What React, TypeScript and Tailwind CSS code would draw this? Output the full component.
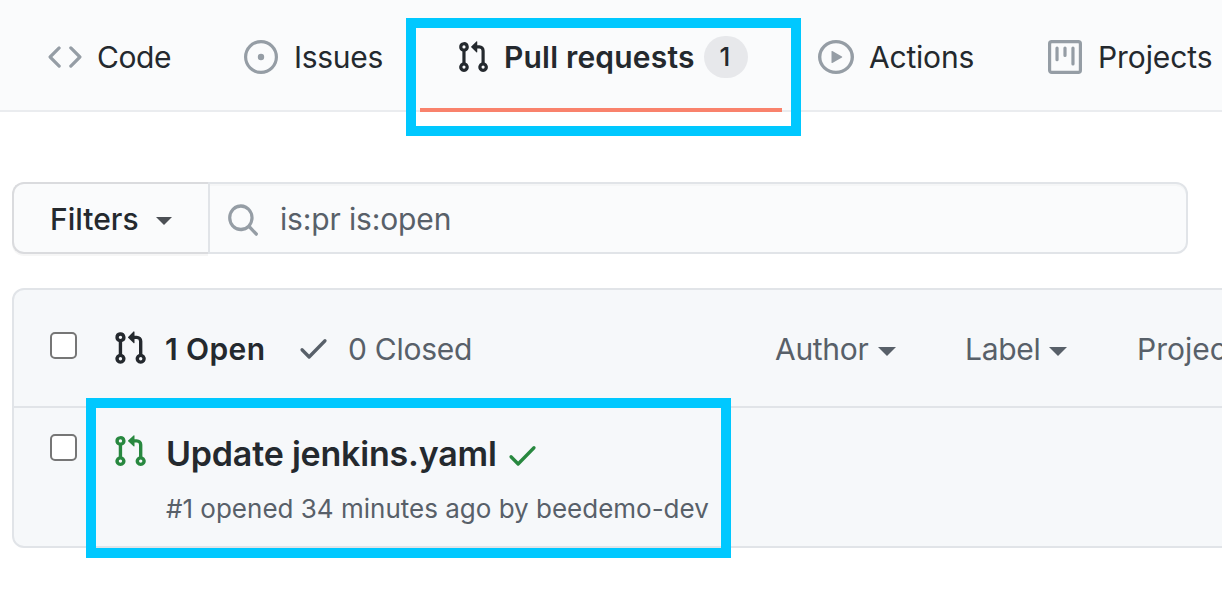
import type { ReactNode } from "react";

const paths = {
  code: "M4.72 3.22a.75.75 0 011.06 1.06L2.06 8l3.72 3.72a.75.75 0 11-1.06 1.06L.47 8.53a.75.75 0 010-1.06l4.25-4.25zm6.56 0a.75.75 0 10-1.06 1.06L13.94 8l-3.72 3.72a.75.75 0 101.06 1.06l4.25-4.25a.75.75 0 000-1.06l-4.25-4.25z",
  issue:
    "M8 9.5a1.5 1.5 0 100-3 1.5 1.5 0 000 3zM8 0a8 8 0 100 16A8 8 0 008 0zM1.5 8a6.5 6.5 0 1113 0 6.5 6.5 0 01-13 0z",
  pull: "M7.177 3.073L9.573.677A.25.25 0 0110 .854v4.792a.25.25 0 01-.427.177L7.177 3.427a.25.25 0 010-.354zM3.75 2.5a.75.75 0 100 1.5.75.75 0 000-1.5zm-2.25.75a2.25 2.25 0 113 2.122v5.256a2.251 2.251 0 11-1.5 0V5.372A2.25 2.25 0 011.5 3.25zM11 2.5h-1V4h1a1 1 0 011 1v5.628a2.251 2.251 0 101.5 0V5A2.5 2.5 0 0011 2.5zm1 10.25a.75.75 0 111.5 0 .75.75 0 01-1.5 0zM3.75 12a.75.75 0 100 1.5.75.75 0 000-1.5z",
  play: "M1.5 8a6.5 6.5 0 1113 0 6.5 6.5 0 01-13 0zM8 0a8 8 0 100 16A8 8 0 008 0zM6.379 5.227A.25.25 0 006 5.442v5.117a.25.25 0 00.379.214l4.264-2.559a.25.25 0 000-.428L6.379 5.227z",
  project:
    "M1.75 0A1.75 1.75 0 000 1.75v12.5C0 15.216.784 16 1.75 16h12.5A1.75 1.75 0 0016 14.25V1.75A1.75 1.75 0 0014.25 0H1.75zM1.5 1.75a.25.25 0 01.25-.25h12.5a.25.25 0 01.25.25v12.5a.25.25 0 01-.25.25H1.75a.25.25 0 01-.25-.25V1.75zM11.75 3a.75.75 0 00-.75.75v7.5a.75.75 0 001.5 0v-7.5a.75.75 0 00-.75-.75zm-8.25.75a.75.75 0 011.5 0v5.5a.75.75 0 01-1.5 0v-5.5zM8 3a.75.75 0 00-.75.75v3.5a.75.75 0 001.5 0v-3.5A.75.75 0 008 3z",
  check:
    "M13.78 4.22a.75.75 0 010 1.06l-7.25 7.25a.75.75 0 01-1.06 0L2.22 9.28a.75.75 0 011.06-1.06L6 10.94l6.72-6.72a.75.75 0 011.06 0z",
  search:
    "M11.5 7a4.499 4.499 0 11-8.998 0A4.499 4.499 0 0111.5 7zm-.82 4.74a6 6 0 111.06-1.06l3.04 3.04a.75.75 0 11-1.06 1.06l-3.04-3.04z",
};

function Icon({ name, className }: { name: keyof typeof paths; className: string }) {
  return (
    <svg
      viewBox="0 0 16 16"
      preserveAspectRatio="none"
      fill="currentColor"
      fillRule="evenodd"
      className={`shrink-0 ${className}`}
      aria-hidden="true"
    >
      <path d={paths[name]} />
    </svg>
  );
}

function Caret({ className }: { className: string }) {
  return (
    <svg viewBox="0 0 18 9" preserveAspectRatio="none" fill="currentColor" className={`shrink-0 ${className}`} aria-hidden="true">
      <path d="M0 0h18L9 9z" />
    </svg>
  );
}

function Checkbox() {
  return <span role="checkbox" aria-checked="false" className="block h-[27px] w-[27px] shrink-0 rounded-[5px] border-2 border-[#767676] bg-white" />;
}

function Tab({ className, children }: { className: string; children: ReactNode }) {
  return <a className={`flex h-[34px] shrink-0 items-center ${className}`}>{children}</a>;
}

export default function App() {
  return (
    <div className="relative h-[616px] w-[1222px] overflow-hidden bg-white font-['Inter',sans-serif] text-[30px] leading-[36px] whitespace-nowrap text-[#24292e]">
      <nav className="flex h-[112px] border-b-2 border-[#eaecef] bg-[#fafbfc]">
        <Tab className="mt-10 ml-12 w-[196px]">
          <Icon name="code" className="h-[34px] w-[34px] text-[#959da5]" />
          <span className="ml-[15px] tracking-[-0.4px]">Code</span>
        </Tab>
        <Tab className="mt-10 w-[176px]">
          <Icon name="issue" className="h-[34px] w-[34px] text-[#959da5]" />
          <span className="ml-4 tracking-[-0.3px]">Issues</span>
        </Tab>
        <a className="flex h-[112px] w-[362px] shrink-0 border-b-4 border-[#f9826c] pt-[36px] pl-9">
          <Icon name="pull" className="mt-1 h-[34px] w-[34px]" />
          <span className="mt-[3px] ml-[14px] w-[200px] font-semibold tracking-[0.2px]">Pull requests</span>
          <span className="flex h-[42px] w-[44px] items-center justify-center rounded-full bg-[#e7e8eb] pr-[2px] text-[26px] font-medium">1</span>
        </a>
        <Tab className="mt-10 ml-9 w-[230px]">
          <Icon name="play" className="h-[34px] w-9 text-[#959da5]" />
          <span className="ml-[15px] tracking-[-0.2px]">Actions</span>
        </Tab>
        <Tab className="mt-10">
          <Icon name="project" className="h-[34px] w-[34px] text-[#959da5]" />
          <span className="ml-4 tracking-[-0.1px]">Projects</span>
        </Tab>
      </nav>

      <div className="mt-[70px] ml-3 flex h-[72px] w-[1176px]">
        <button className="flex w-[196px] shrink-0 items-center rounded-l-[12px] border-2 border-r-0 border-[#dadbde] bg-[#fafbfc] pt-px pl-9 shadow-[0_2px_0_rgba(27,31,35,0.04)]">
          <span className="w-[106px] text-left font-medium">Filters</span>
          <Caret className="mt-1 h-2 w-4 text-[#4c5055]" />
        </button>
        <div className="flex flex-1 items-center rounded-r-[12px] border-2 border-[#e1e4e8] bg-[#fafbfc] pl-4 text-[#586069] shadow-[inset_0_2px_0_rgba(225,228,232,0.2)]">
          <Icon name="search" className="mt-[3px] h-9 w-[34px] text-[#959da5]" />
          <span className="mt-px ml-5 tracking-[-0.15px]">is:pr is:open</span>
        </div>
      </div>

      <section className="mt-[34px] ml-3 h-[260px] w-[1300px] rounded-[12px] border-2 border-[#e1e4e8] bg-[#f6f8fa]">
        <header className="flex h-[118px] items-start border-b-2 border-[#e1e4e8] pt-10 pl-9 text-[#586069]">
          <div className="mt-[2px] w-[62px] shrink-0">
            <Checkbox />
          </div>
          <Icon name="pull" className="h-9 w-9 text-[#24292e]" />
          <span className="mt-px ml-[17px] w-[131px] shrink-0 font-semibold tracking-[0.4px] text-[#24292e]">1 Open</span>
          <Icon name="check" className="h-9 w-[35px]" />
          <span className="mt-px ml-[17px] w-[427px] shrink-0 tracking-[-0.25px]">0 Closed</span>
          <span className="mt-px flex w-[190px] shrink-0 items-center">
            <span className="tracking-[-0.3px]">Author</span>
            <Caret className="mt-[5px] ml-[10px] h-[9px] w-[18px]" />
          </span>
          <span className="mt-px flex w-[172px] shrink-0 items-center">
            <span className="tracking-[-0.3px]">Label</span>
            <Caret className="mt-[5px] ml-[9px] h-[9px] w-[18px]" />
          </span>
          <span className="mt-px shrink-0">Projects</span>
        </header>
        <article className="flex pt-[26px] pl-9">
          <div className="w-[62px] shrink-0">
            <Checkbox />
          </div>
          <Icon name="pull" className="h-[34px] w-9 text-[#28883f]" />
          <div className="ml-[18px]">
            <h2 className="flex h-10 items-center text-[34px] leading-10 font-semibold">
              <span className="w-[339px] tracking-[-0.2px]">Update jenkins.yaml</span>
              <Icon name="check" className="mt-[2px] h-9 w-[35px] text-[#28883f]" />
            </h2>
            <p className="mt-[17px] text-[26px] leading-9 text-[#586069]">#1 opened 34 minutes ago by beedemo-dev</p>
          </div>
        </article>
      </section>

      <div className="pointer-events-none absolute top-[18px] left-[406px] h-[118px] w-[395px] border-[10px] border-[#00c8ff]" />
      <div className="pointer-events-none absolute top-[398px] left-[86px] h-[160px] w-[645px] border-[10px] border-[#00c8ff]" />
    </div>
  );
}
